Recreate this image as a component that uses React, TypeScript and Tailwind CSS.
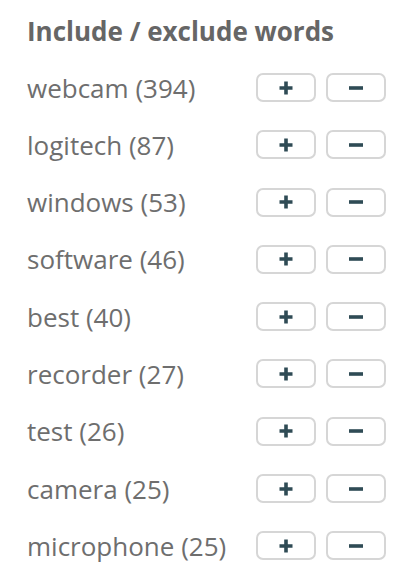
const words: [string, number][] = [
  ["webcam", 394],
  ["logitech", 87],
  ["windows", 53],
  ["software", 46],
  ["best", 40],
  ["recorder", 27],
  ["test", 26],
  ["camera", 25],
  ["microphone", 25],
];

export default function App() {
  return (
    <div className="h-[580px] w-[406px] bg-white pl-[27px] pr-[20px] pt-[12px] font-['Open_Sans',sans-serif] text-[#6e6e6e]">
      {/* HEADER */}
      <h2 className="text-[26px] font-bold leading-[38px] text-[#666]">Include / exclude words</h2>

      {/* WORD LIST */}
      <div className="mt-[23px] flex flex-col gap-[28.3px]">
        {words.map(([word, count]) => (
          <div key={word} className="flex h-[29px] items-center justify-between">
            <span className="text-[26px] leading-none">
              {word} ({count})
            </span>
            <div className="flex gap-[10px]">
              <button className="flex h-[29px] w-[60px] items-center justify-center rounded-[7px] border-2 border-[#d6d6d6] bg-white">
                <svg width="16" height="16" viewBox="0 0 16 16">
                  <path d="M8 1.5v13M1.5 8h13" stroke="#2f4b55" strokeWidth="3.6" />
                </svg>
              </button>
              <button className="flex h-[29px] w-[60px] items-center justify-center rounded-[7px] border-2 border-[#d6d6d6] bg-white">
                <svg width="18" height="16" viewBox="0 0 18 16">
                  <path d="M2 8h14" stroke="#2f4b55" strokeWidth="3.6" />
                </svg>
              </button>
            </div>
          </div>
        ))}
      </div>
    </div>
  );
}
